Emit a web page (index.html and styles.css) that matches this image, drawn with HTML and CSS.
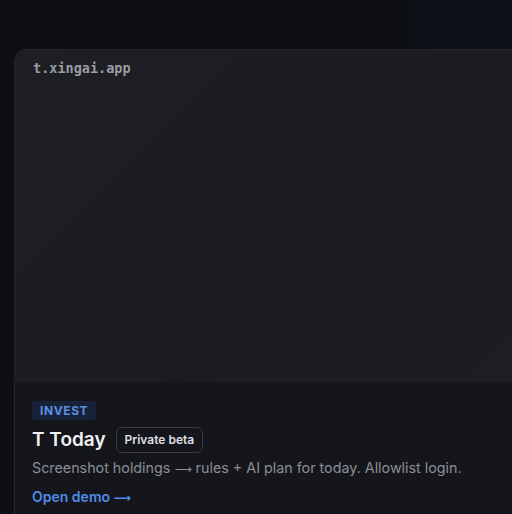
FILE: index.html
```html
<!DOCTYPE html>
<html>
<head>
<meta charset="utf-8">
<link rel="stylesheet" href="styles.css">
</head>
<body>
<div class="page">
  <article class="card">
    <div class="preview">
      <span class="host">t.xingai.app</span>
    </div>
    <div class="body">
      <span class="tag">INVEST</span>
      <div class="title-row">
        <h2 class="title">T Today</h2>
        <span class="pill">Private beta</span>
      </div>
      <p class="desc">Screenshot holdings <span class="arrow">⟶</span> rules + AI plan for today. Allowlist login.</p>
      <a class="link" href="#">Open demo <span class="arrow">⟶</span></a>
    </div>
  </article>
</div>
</body>
</html>
```
FILE: styles.css
```css
html, body {
  margin: 0;
  height: 100%;
}
body {
  background: linear-gradient(90deg, #0e0f14 0%, #0e0f14 65%, #0d1019 100%);
  font-family: Inter, "Noto Sans", sans-serif;
  overflow: hidden;
}
.page {
  padding: 49px 0 0 14px;
}
.card {
  width: 510px;
  border: 1px solid #24262c;
  border-radius: 12px;
  overflow: hidden;
  background: #15161b;
}
.preview {
  height: 315px;
  padding: 7px 18px 10px;
  background: linear-gradient(135deg, #1e1f24 0%, #1b1c21 60%, #1d1e24 100%);
  border-bottom: 1px solid #1a1b20;
}
.host {
  font-family: "DejaVu Sans Mono", "Liberation Mono", monospace;
  font-size: 13.5px;
  font-weight: bold;
  color: #9a9ca3;
}
.body {
  display: flex;
  flex-direction: column;
  align-items: flex-start;
  padding: 18px 17px 20px;
  background: #15161b;
}
.tag {
  background: #172238;
  color: #5b8fe0;
  font-size: 12px;
  font-weight: 700;
  letter-spacing: 0.6px;
  padding: 2px 8px;
  border-radius: 3px;
  line-height: 15px;
}
.title-row {
  display: flex;
  align-items: center;
  gap: 10px;
  margin-top: 7px;
}
.title {
  margin: 0;
  font-size: 19px;
  font-weight: 600;
  color: #f1f2f4;
  line-height: 26px;
}
.pill {
  border: 1px solid #3a3c42;
  border-radius: 6px;
  padding: 3px 8px;
  font-size: 12px;
  font-weight: 600;
  color: #dedfe2;
  line-height: 18px;
}
.desc {
  margin: 5px 0 0;
  font-size: 14.3px;
  color: #8a8e96;
  line-height: 20px;
}
.arrow {
  font-family: "DejaVu Sans", sans-serif;
  font-size: 12px;
}
.link {
  margin-top: 8px;
  font-size: 14px;
  font-weight: 600;
  color: #4d8ce6;
  text-decoration: none;
  line-height: 20px;
}
```
